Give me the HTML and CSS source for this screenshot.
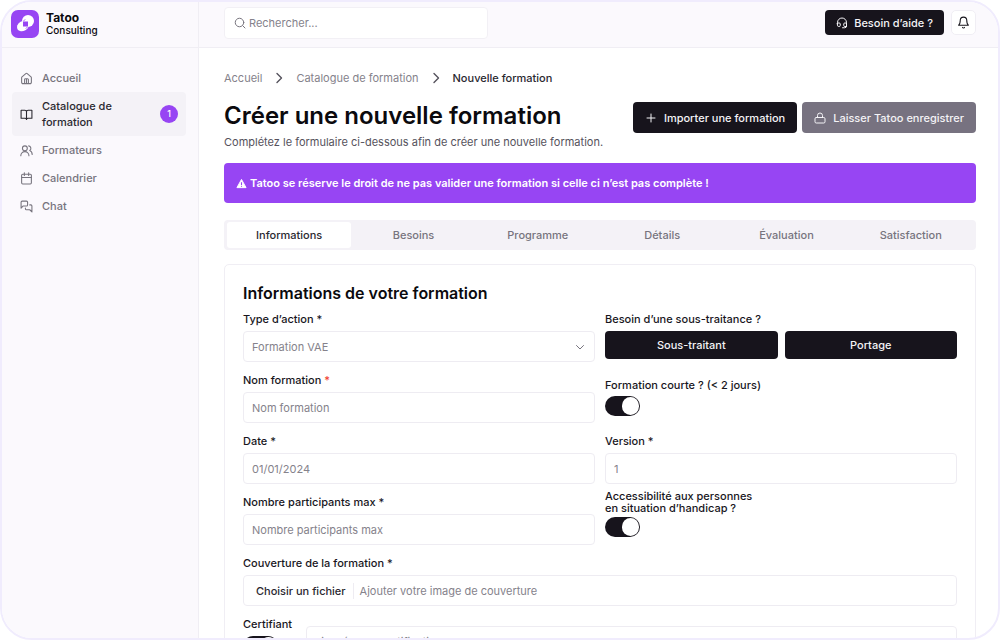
FILE: index.html
```html
<!DOCTYPE html>
<html lang="fr">
<head>
<meta charset="utf-8">
<meta name="viewport" content="width=device-width, initial-scale=1">
<title>Tatoo Consulting – Nouvelle formation</title>
<link rel="stylesheet" href="styles.css">
</head>
<body>
<div class="app">
  <aside class="sidebar">
    <div class="brand">
      <svg class="brand-logo" viewBox="0 0 28 28" aria-hidden="true">
        <rect width="28" height="28" rx="7" fill="#9745f3"/>
        <circle cx="17" cy="11" r="6" fill="#fff"/>
        <ellipse cx="12" cy="16" rx="6.400" ry="4.800" transform="rotate(-30 12 16)" fill="#fff"/>
        <path d="M12 11.500h5v5h-5z" fill="#9745f3"/>
        <path d="M12.400 11.200l1.800-1.900M16.600 16.800l-1.800 1.900" stroke="#9745f3" stroke-width="0.800"/>
      </svg>
      <div class="brand-name"><strong>Tatoo</strong><span>Consulting</span></div>
    </div>
    <nav class="menu" aria-label="Menu principal">
      <a class="menu-item" href="#">
        <svg class="icon" viewBox="0 0 24 24"><path d="M3 10.500a2 2 0 0 1 .7-1.500l7-6.100a2 2 0 0 1 2.600 0l7 6.100a2 2 0 0 1 .7 1.500V19a2.500 2.500 0 0 1-2.500 2.500h-13A2.500 2.500 0 0 1 3 19z"/><path d="M8.500 21v-7a1.500 1.500 0 0 1 1.500-1.500h4a1.500 1.500 0 0 1 1.500 1.500v7M12 13v8"/></svg>
        <span>Accueil</span>
      </a>
      <a class="menu-item menu-item--active" href="#" aria-current="page">
        <svg class="icon" viewBox="0 0 24 24"><path d="M2 4h7a3 3 0 0 1 3 3v14a3 3 0 0 0-3-2H2zM22 4h-7a3 3 0 0 0-3 3v14a3 3 0 0 1 3-2h7z"/></svg>
        <span>Catalogue de formation</span>
        <span class="badge">1</span>
      </a>
      <a class="menu-item" href="#">
        <svg class="icon" viewBox="0 0 24 24"><circle cx="9" cy="8" r="4.500"/><path d="M1.500 21.500a7.500 7.500 0 0 1 15 0M16 3.500a4.500 4.500 0 0 1 2 8.300c3 1.200 4.500 4.200 4.500 7.700"/></svg>
        <span>Formateurs</span>
      </a>
      <a class="menu-item" href="#">
        <svg class="icon" viewBox="0 0 24 24"><rect x="3" y="4" width="18" height="18" rx="2"/><path d="M8 1.500v5M16 1.500v5M3 10h18"/></svg>
        <span>Calendrier</span>
      </a>
      <a class="menu-item" href="#">
        <svg class="icon" viewBox="0 0 24 24"><path d="M14 9a2 2 0 0 1-2 2H6l-4 4V4a2 2 0 0 1 2-2h8a2 2 0 0 1 2 2z"/><path d="M18 9h2a2 2 0 0 1 2 2v11l-4-4h-6a2 2 0 0 1-2-2v-1"/></svg>
        <span>Chat</span>
      </a>
    </nav>
  </aside>

  <div class="page">
    <header class="topbar">
      <label class="search">
        <svg class="icon" viewBox="0 0 24 24"><circle cx="11" cy="11" r="8.500"/><path d="M17.500 17.500L22 22"/></svg>
        <input type="search" placeholder="Rechercher..." aria-label="Rechercher">
      </label>
      <div class="topbar-actions">
        <button class="btn btn--help" type="button">
          <svg class="icon" viewBox="0 0 24 24"><path d="M3 14v-3a9 9 0 0 1 18 0v7a3.500 3.500 0 0 1-3.500 3.500H13M3 12h3.500a2 2 0 0 1 2 2v3a2 2 0 0 1-2 2H5a2 2 0 0 1-2-2zM21 12h-3.500a2 2 0 0 0-2 2v3a2 2 0 0 0 2 2H21"/></svg>
          Besoin d’aide ?
        </button>
        <button class="bell" type="button" aria-label="Notifications">
          <svg class="icon" viewBox="0 0 24 24"><path d="M6 8a6 6 0 0 1 12 0c0 7 3 9 3 9H3s3-2 3-9M10 21a2.200 2.200 0 0 0 4 0"/></svg>
        </button>
      </div>
    </header>

    <main class="content">
      <nav class="breadcrumb" aria-label="Fil d’Ariane">
        <a href="#">Accueil</a>
        <svg class="chevron" viewBox="0 0 8 12"><path d="M2 1.500L6.500 6 2 10.500"/></svg>
        <a href="#">Catalogue de formation</a>
        <svg class="chevron" viewBox="0 0 8 12"><path d="M2 1.500L6.500 6 2 10.500"/></svg>
        <span aria-current="page">Nouvelle formation</span>
      </nav>

      <div class="heading">
        <div class="heading-text">
          <h1>Créer une nouvelle formation</h1>
          <p>Complétez le formulaire ci-dessous afin de créer une nouvelle formation.</p>
        </div>
        <div class="heading-actions">
          <button class="btn" type="button">
            <svg class="icon" viewBox="0 0 24 24"><path d="M12 4v16M4 12h16"/></svg>
            Importer une formation
          </button>
          <button class="btn btn--muted" type="button">
            <svg class="icon" viewBox="0 0 24 24"><rect x="2" y="11" width="20" height="11" rx="2.500"/><path d="M7 11V7a5 5 0 0 1 10 0v4"/></svg>
            Laisser Tatoo enregistrer
          </button>
        </div>
      </div>

      <div class="notice" role="alert">
        <svg class="notice-icon" viewBox="0 0 12 12"><path d="M6 1.500L11 10.500H1z" fill="#fff" stroke="#fff" stroke-linejoin="round"/><path d="M6 4.500v3M6 8.500v1" stroke="#9745f3" stroke-width="1.200"/></svg>
        Tatoo se réserve le droit de ne pas valider une formation si celle ci n’est pas complète !
      </div>

      <div class="tabs" role="tablist">
        <button class="tab tab--active" type="button" role="tab" aria-selected="true">Informations</button>
        <button class="tab" type="button" role="tab">Besoins</button>
        <button class="tab" type="button" role="tab">Programme</button>
        <button class="tab" type="button" role="tab">Détails</button>
        <button class="tab" type="button" role="tab">Évaluation</button>
        <button class="tab" type="button" role="tab">Satisfaction</button>
      </div>

      <form class="card">
        <h2>Informations de votre formation</h2>
        <div class="fields">
          <div class="field">
            <label for="type">Type d’action *</label>
            <div class="select">
              <select class="control" id="type"><option>Formation VAE</option></select>
              <svg class="select-arrow" viewBox="0 0 10 10"><path d="M1.500 3.500L5 7l3.500-3.500"/></svg>
            </div>
          </div>
          <div class="field" role="group" aria-labelledby="sub">
            <span class="label" id="sub">Besoin d’une sous-traitance ?</span>
            <div class="choices">
              <button class="btn btn--choice" type="button">Sous-traitant</button>
              <button class="btn btn--choice" type="button">Portage</button>
            </div>
          </div>

          <div class="field">
            <label for="nom">Nom formation <span class="required">*</span></label>
            <input class="control" id="nom" type="text" placeholder="Nom formation">
          </div>
          <div class="field field--switch">
            <label for="courte">Formation courte ? (&lt; 2 jours)</label>
            <input class="switch" id="courte" type="checkbox" role="switch" checked>
          </div>

          <div class="field">
            <label for="date">Date *</label>
            <input class="control" id="date" type="text" placeholder="01/01/2024">
          </div>
          <div class="field">
            <label for="version">Version *</label>
            <input class="control" id="version" type="text" placeholder="1">
          </div>

          <div class="field">
            <label for="max">Nombre participants max *</label>
            <input class="control" id="max" type="text" placeholder="Nombre participants max">
          </div>
          <div class="field field--access">
            <label for="acces">Accessibilité aux personnes<br>en situation d’handicap ?</label>
            <input class="switch" id="acces" type="checkbox" role="switch" checked>
          </div>

          <div class="field field--wide">
            <span class="label">Couverture de la formation *</span>
            <label class="control file" for="cover">
              <span class="file-button">Choisir un fichier</span>
              <span>Ajouter votre image de couverture</span>
              <input class="visually-hidden" id="cover" type="file">
            </label>
          </div>

          <div class="certification field--wide">
            <div class="field">
              <label for="cert">Certifiant</label>
              <input class="switch" id="cert" type="checkbox" role="switch" checked>
            </div>
            <input class="control" type="text" placeholder="Libellé de la certification *" aria-label="Libellé de la certification">
          </div>
        </div>
      </form>
    </main>
  </div>
</div>
</body>
</html>
```
FILE: styles.css
```css
* {
  box-sizing: border-box;
}

body {
  margin: 0;
  background: #fff;
  color: #18161d;
  font: 400 11px/16px Inter, "Liberation Sans", sans-serif;
}

h1,
h2,
p {
  margin: 0;
}

a {
  color: inherit;
  text-decoration: none;
}

button,
input,
select {
  font: inherit;
  color: inherit;
}

.icon,
.chevron,
.select-arrow {
  flex: none;
  fill: none;
  stroke: currentColor;
  stroke-width: 2;
  stroke-linecap: round;
  stroke-linejoin: round;
}

.icon {
  width: 12px;
  height: 12px;
}

.app {
  display: flex;
  height: 100vh;
  overflow: hidden;
  border: 2px solid #f0ecfd;
  border-radius: 32px;
}

/* Sidebar */

.sidebar {
  flex: none;
  width: 197px;
  border-right: 1px solid #f0eef4;
  background: #fbf9fd;
}

.brand {
  display: flex;
  align-items: center;
  gap: 7px;
  height: 46px;
  padding: 0 9px 2px;
  border-bottom: 1px solid #f0eef4;
}

.brand-logo {
  width: 28px;
  height: 28px;
}

.brand-name {
  display: flex;
  flex-direction: column;
  color: #0b0a0e;
  font-size: 10px;
  font-weight: 500;
  line-height: 13px;
}

.brand-name strong {
  font-size: 12px;
  font-weight: 700;
}

.menu {
  display: flex;
  flex-direction: column;
  padding: 16px 12px 0 10px;
}

.menu .icon {
  width: 13px;
  height: 13px;
}

.menu-item {
  display: flex;
  align-items: center;
  gap: 9px;
  padding: 6px 8px;
  border-radius: 4px;
  color: #77747e;
  font-weight: 500;
}

.menu-item--active {
  background: #f4f2f7;
  color: #2a2830;
}

.badge {
  flex: none;
  width: 18px;
  margin-left: auto;
  border-radius: 9px;
  background: #9745f3;
  color: #fff;
  font-size: 9px;
  line-height: 18px;
  text-align: center;
}

/* Top bar */

.page {
  flex: 1;
  min-width: 0;
}

.topbar {
  display: flex;
  align-items: center;
  justify-content: space-between;
  height: 46px;
  padding: 0 22px 4px 25px;
  border-bottom: 1px solid #f0eef4;
  background: #fbf9fd;
}

.search {
  display: flex;
  align-items: center;
  gap: 3px;
  width: 264px;
  height: 32px;
  padding: 0 9px;
  border: 1px solid #f2f0f5;
  border-radius: 4px;
  background: #fff;
  color: #77747e;
}

.search input {
  flex: 1;
  min-width: 0;
  padding: 0;
  border: 0;
  outline: 0;
  background: none;
}

::placeholder {
  color: #85828b;
  opacity: 1;
}

.topbar-actions {
  display: flex;
  gap: 7px;
}

.bell {
  display: grid;
  place-items: center;
  width: 25px;
  height: 25px;
  padding: 0;
  border: 1px solid #f0eef4;
  border-radius: 5px;
  background: #fff;
}

.bell .icon {
  width: 13px;
  height: 13px;
}

/* Buttons */

.btn {
  display: flex;
  align-items: center;
  justify-content: center;
  gap: 7px;
  height: 31px;
  padding: 0 12px;
  border: 0;
  border-radius: 4px;
  background: #17141c;
  color: #f4f3f6;
  font-weight: 500;
  white-space: nowrap;
}

.btn--help {
  gap: 6px;
  height: 25px;
  padding: 0 11px;
}

.btn--muted {
  background: #777280;
}

.btn--choice {
  flex: 1;
  height: 28px;
}

/* Content */

.content {
  padding: 22px 22px 0 25px;
}

.breadcrumb {
  display: flex;
  align-items: center;
  gap: 13px;
  color: #85828b;
}

.breadcrumb [aria-current] {
  color: #2a2830;
  font-weight: 500;
}

.chevron {
  width: 8px;
  height: 12px;
  stroke: #55525c;
  stroke-width: 1.4;
}

.heading {
  display: flex;
  justify-content: space-between;
  margin-top: 16px;
}

.heading h1 {
  color: #0b0a0e;
  font-size: 24px;
  font-weight: 600;
  line-height: 28px;
}

.heading p {
  margin-top: 4px;
  color: #55525c;
}

.heading-actions {
  display: flex;
  gap: 5px;
}

.notice {
  display: flex;
  align-items: center;
  gap: 3px;
  height: 40px;
  margin-top: 13px;
  padding: 0 12px;
  border-radius: 4px;
  background: #9745f3;
  color: #fff;
  font-weight: 600;
}

.notice-icon {
  width: 11px;
  height: 11px;
}

.tabs {
  display: flex;
  margin-top: 17px;
  padding: 2px 3px;
  border-radius: 4px;
  background: #f4f2f7;
}

.tab {
  flex: 1;
  height: 26px;
  padding: 0;
  border: 0;
  border-radius: 3px;
  background: none;
  color: #77747e;
  font-weight: 500;
}

.tab--active {
  background: #fff;
  color: #2a2830;
}

/* Form */

.card {
  margin-top: 14px;
  padding: 17px 18px;
  border: 1px solid #f0eef4;
  border-radius: 5px;
}

.card h2 {
  color: #0b0a0e;
  font-size: 16px;
  font-weight: 600;
  line-height: 22px;
}

.fields {
  display: grid;
  grid-template-columns: 1fr 1fr;
  gap: 10px;
  margin-top: 7px;
}

.field {
  display: flex;
  flex-direction: column;
  gap: 4px;
}

.field--wide {
  grid-column: 1 / -1;
}

.field > label,
.label {
  font-weight: 500;
}

.field > .control {
  font-weight: 400;
}

.required {
  color: #f03a2e;
}

.control {
  width: 100%;
  height: 31px;
  padding: 0 8px;
  border: 1px solid #eeecf2;
  border-radius: 4px;
  outline: 0;
  background: #fff;
  color: #85828b;
}

.select {
  display: grid;
  align-items: center;
}

.select > * {
  grid-area: 1 / 1;
}

.select .control {
  appearance: none;
}

.select-arrow {
  justify-self: end;
  width: 10px;
  height: 10px;
  margin-right: 10px;
  stroke: #77747e;
  stroke-width: 1;
  pointer-events: none;
}

.choices {
  display: flex;
  gap: 7px;
}

.field--switch {
  gap: 3px;
  padding-top: 5px;
}

.field--access {
  gap: 3px;
  margin-top: -4px;
}

.field--access > label {
  line-height: 12px;
}

.switch {
  appearance: none;
  width: 35px;
  height: 20px;
  margin: 0;
  padding: 1px;
  border-radius: 10px;
  background: #17141c;
}

.switch::before {
  content: "";
  display: block;
  width: 17px;
  height: 18px;
  margin-left: auto;
  border-radius: 9px;
  background: #fff;
}

.field .file {
  display: flex;
  align-items: center;
  gap: 6px;
  padding: 0 12px;
  font-weight: 400;
}

.file-button {
  padding-right: 7px;
  border-right: 1px solid #eeecf2;
  color: #2a2830;
  font-weight: 500;
}

.visually-hidden {
  position: absolute;
  width: 1px;
  height: 1px;
  overflow: hidden;
  opacity: 0;
}

.certification {
  display: flex;
  align-items: flex-start;
  gap: 14px;
}

.certification > .control {
  flex: 1;
  margin-top: 10px;
}
```
